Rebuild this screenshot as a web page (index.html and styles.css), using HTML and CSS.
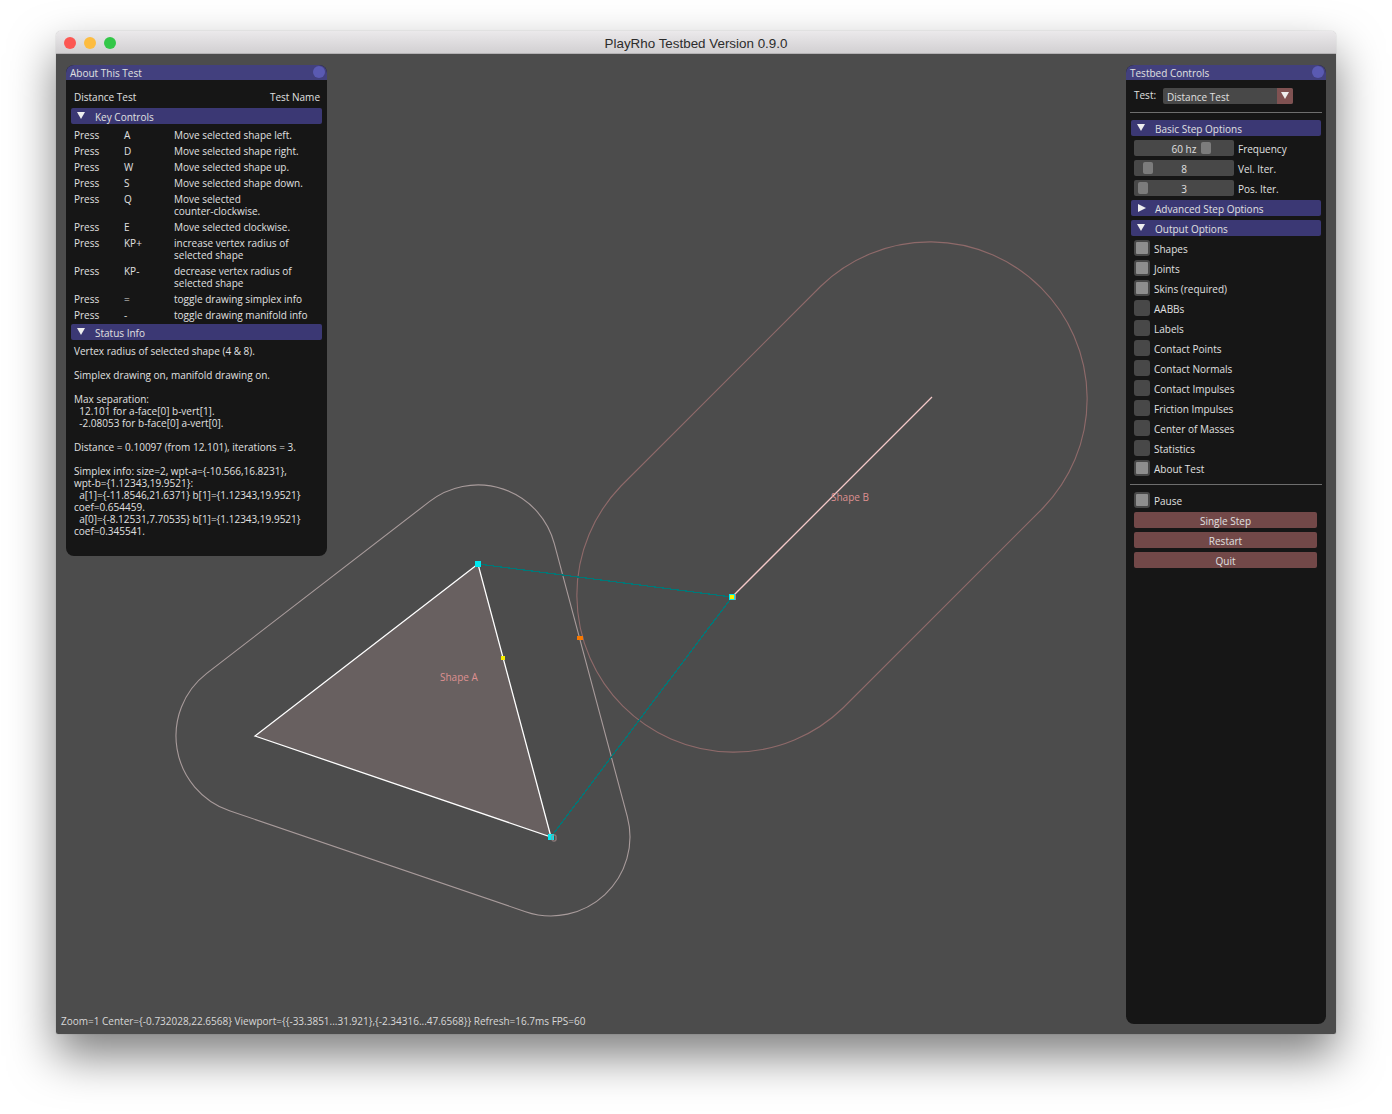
FILE: index.html
```html
<!DOCTYPE html>
<html lang="en">
<head>
    <meta charset="UTF-8">
    <title>PlayRho Testbed Version 0.9.0</title>
    <link rel="stylesheet" href="styles.css">
</head>
<body>
    <div class="window">
        <div class="titlebar">
            <div class="lights">
                <span class="light red"></span>
                <span class="light yellow"></span>
                <span class="light green"></span>
            </div>
            <span class="title">PlayRho Testbed Version 0.9.0</span>
        </div>

        <div class="canvas">
            <svg class="scene" viewBox="56 54 1280 980" width="1280" height="980">
                <polygon points="478,564 255,736 551,837" fill="#686060" stroke="none"/>
                <path d="M429.7 501.4 L206.7 673.4 A79 79 0 0 0 229.5 810.7 L525.5 911.7 A79 79 0 0 0 627.3 816.6 L554.3 543.6 A79 79 0 0 0 429.7 501.4 Z" fill="none" stroke="#a89b9b" stroke-width="1.1"/>
                <path d="M621 486 L821 286 A157 157 0 0 1 1043 508 L843 708 A157 157 0 0 1 621 486 Z" fill="none" stroke="#8f6a6a" stroke-width="1.1"/>
                <line class="crisp" x1="478" y1="564" x2="732" y2="597" stroke="#007878" stroke-width="1.2"/>
                <line class="crisp" x1="551" y1="837" x2="732" y2="597" stroke="#007878" stroke-width="1.2"/>
                <polygon points="478,564 255,736 551,837" fill="none" stroke="#fff" stroke-width="1.3"/>
                <line x1="732" y1="597" x2="932" y2="397" stroke="#f4c8c8" stroke-width="1.3"/>
                <rect x="475" y="561" width="6" height="6" fill="#00e8f0"/>
                <rect x="548" y="834" width="6" height="6" fill="#00e8f0"/>
                <rect x="552" y="835" width="4" height="6" rx="1" fill="none" stroke="#a08888" stroke-width="1"/>
                <rect x="501" y="656" width="4" height="4" fill="#f8f000"/>
                <rect x="577" y="636" width="6" height="4" fill="#f87800"/>
                <rect x="729" y="594" width="6" height="6" fill="#00e8f0"/>
                <rect x="730" y="595" width="4" height="4" fill="#f8f000"/>
                <rect x="735" y="594" width="1" height="6" fill="#a08888"/>
            </svg>

            <span class="shape-label label-a">Shape A</span>
            <span class="shape-label label-b">Shape B</span>

            <div class="panel about">
                <div class="panel-title">About This Test<span class="collapse-dot"></span></div>
                <div class="panel-body">
                    <div class="name-row"><span>Distance Test</span><span>Test Name</span></div>
                    <div class="section"><span class="arrow-down"></span>Key Controls</div>
                    <div class="keys">
                        <span>Press</span><span>A</span><span>Move selected shape left.</span>
                        <span>Press</span><span>D</span><span>Move selected shape right.</span>
                        <span>Press</span><span>W</span><span>Move selected shape up.</span>
                        <span>Press</span><span>S</span><span>Move selected shape down.</span>
                        <span>Press</span><span>Q</span><span>Move selected<br>counter-clockwise.</span>
                        <span>Press</span><span>E</span><span>Move selected clockwise.</span>
                        <span>Press</span><span>KP+</span><span>increase vertex radius of<br>selected shape</span>
                        <span>Press</span><span>KP-</span><span>decrease vertex radius of<br>selected shape</span>
                        <span>Press</span><span>=</span><span>toggle drawing simplex info</span>
                        <span>Press</span><span>-</span><span>toggle drawing manifold info</span>
                    </div>
                    <div class="section"><span class="arrow-down"></span>Status Info</div>
                    <pre class="status">Vertex radius of selected shape (4 &amp; 8).

Simplex drawing on, manifold drawing on.

Max separation:
  12.101 for a-face[0] b-vert[1].
  -2.08053 for b-face[0] a-vert[0].

Distance = 0.10097 (from 12.101), iterations = 3.

Simplex info: size=2, wpt-a={-10.566,16.8231},
wpt-b={1.12343,19.9521}:
  a[1]={-11.8546,21.6371} b[1]={1.12343,19.9521}
coef=0.654459.
  a[0]={-8.12531,7.70535} b[1]={1.12343,19.9521}
coef=0.345541.</pre>
                </div>
            </div>

            <div class="panel controls">
                <div class="panel-title">Testbed Controls<span class="collapse-dot"></span></div>
                <div class="panel-body controls-body">
                    <div class="test-row">
                        <span class="test-label">Test:</span>
                        <div class="combo">Distance Test<span class="combo-btn"><span class="arrow-down"></span></span></div>
                    </div>
                    <hr class="sep">
                    <div class="section"><span class="arrow-down"></span>Basic Step Options</div>
                    <div class="slider-row"><div class="slider">60 hz<span class="grab grab-freq"></span></div>Frequency</div>
                    <div class="slider-row"><div class="slider">8<span class="grab grab-vel"></span></div>Vel. Iter.</div>
                    <div class="slider-row"><div class="slider">3<span class="grab grab-pos"></span></div>Pos. Iter.</div>
                    <div class="section"><span class="arrow-right"></span>Advanced Step Options</div>
                    <div class="section"><span class="arrow-down"></span>Output Options</div>
                    <div class="check-row"><span class="check on"></span>Shapes</div>
                    <div class="check-row"><span class="check on"></span>Joints</div>
                    <div class="check-row"><span class="check on"></span>Skins (required)</div>
                    <div class="check-row"><span class="check"></span>AABBs</div>
                    <div class="check-row"><span class="check"></span>Labels</div>
                    <div class="check-row"><span class="check"></span>Contact Points</div>
                    <div class="check-row"><span class="check"></span>Contact Normals</div>
                    <div class="check-row"><span class="check"></span>Contact Impulses</div>
                    <div class="check-row"><span class="check"></span>Friction Impulses</div>
                    <div class="check-row"><span class="check"></span>Center of Masses</div>
                    <div class="check-row"><span class="check"></span>Statistics</div>
                    <div class="check-row"><span class="check on"></span>About Test</div>
                    <hr class="sep">
                    <div class="check-row"><span class="check on"></span>Pause</div>
                    <div class="btn">Single Step</div>
                    <div class="btn">Restart</div>
                    <div class="btn">Quit</div>
                </div>
            </div>

            <div class="statusline">Zoom=1 Center={-0.732028,22.6568} Viewport={{-33.3851...31.921},{-2.34316...47.6568}} Refresh=16.7ms FPS=60</div>
        </div>
    </div>
</body>
</html>
```

FILE: styles.css
```css
html, body {
    margin: 0;
    height: 100%;
}

body {
    background: #fff;
    padding: 31px 56px 0;
    box-sizing: border-box;
    overflow: hidden;
    font-family: "Open Sans", "Noto Sans", sans-serif;
    font-size: 10px;
    line-height: 12px;
    color: #e0e0e0;
}

.window {
    width: 1280px;
    height: 1003px;
    display: flex;
    flex-direction: column;
    border-radius: 5px 5px 2px 2px;
    box-shadow: 0 22px 46px rgba(0, 0, 0, 0.5), 0 0 1px rgba(0, 0, 0, 0.4);
}

.titlebar {
    height: 23px;
    flex: none;
    position: relative;
    display: flex;
    align-items: center;
    justify-content: center;
    box-sizing: border-box;
    padding-top: 3px;
    border-radius: 5px 5px 0 0;
    border-bottom: 1px solid #b4b2b4;
    background: linear-gradient(#ebe9eb, #d2d0d2);
}

.lights {
    position: absolute;
    left: 8px;
    top: 6px;
    display: flex;
    gap: 8px;
}

.light {
    width: 12px;
    height: 12px;
    border-radius: 50%;
}

.red { background: #fc5753; }
.yellow { background: #fdbc40; }
.green { background: #33c748; }

.title {
    font-family: "Liberation Sans", Arial, sans-serif;
    font-size: 13.4px;
    color: #2c2c2c;
}

.canvas {
    flex: 1;
    position: relative;
    background: #4c4c4c;
    border-radius: 0 0 2px 2px;
}

.scene {
    position: absolute;
    left: 0;
    top: 0;
}

.crisp {
    shape-rendering: crispEdges;
}

.shape-label {
    position: absolute;
    color: #de9090;
}

.label-a { left: 384px; top: 617px; }
.label-b { left: 775px; top: 437px; }

.panel {
    position: absolute;
    background: #161616;
    border-radius: 8px;
}

.about {
    left: 10px;
    top: 11px;
    width: 261px;
    height: 491px;
}

.controls {
    left: 1070px;
    top: 11px;
    width: 200px;
    height: 959px;
}

.panel-title {
    height: 15px;
    position: relative;
    padding-left: 4px;
    line-height: 16px;
    border-radius: 8px 8px 0 0;
    background: #42407e;
}

.collapse-dot {
    position: absolute;
    right: 2px;
    top: 1px;
    width: 12px;
    height: 12px;
    border-radius: 50%;
    background: #5a5ab2;
}

.panel-body {
    padding: 11px 5px 0;
}

.name-row {
    display: flex;
    justify-content: space-between;
    padding: 0 2px 0 3px;
    margin-bottom: 5px;
}

.section {
    width: 190px;
    height: 16px;
    display: flex;
    align-items: center;
    position: relative;
    padding-left: 24px;
    padding-top: 1px;
    box-sizing: border-box;
    border-radius: 2px;
    background: #3b3874;
}

.about .section {
    width: 251px;
}

.arrow-down {
    position: absolute;
    left: 6px;
    top: 4px;
    width: 0;
    height: 0;
    border-left: 4.5px solid transparent;
    border-right: 4.5px solid transparent;
    border-top: 7px solid #eee;
}

.arrow-right {
    position: absolute;
    left: 7px;
    top: 4px;
    width: 0;
    height: 0;
    border-top: 4.5px solid transparent;
    border-bottom: 4.5px solid transparent;
    border-left: 8px solid #eee;
}

.keys {
    display: grid;
    grid-template-columns: 50px 50px 1fr;
    row-gap: 4px;
    padding: 5px 0 3px 3px;
}

.status {
    margin: 5px 0 0 3px;
    font: inherit;
}

.controls-body {
    display: flex;
    flex-direction: column;
    gap: 4px;
    padding-top: 8px;
}

.test-row {
    display: flex;
    gap: 6px;
    height: 16px;
    padding-left: 3px;
}

.test-label {
    width: 23px;
    margin-top: 1px;
}

.combo {
    width: 130px;
    height: 16px;
    position: relative;
    box-sizing: border-box;
    padding: 3px 0 0 4px;
    border-radius: 2px;
    background: #484848;
}

.combo-btn {
    position: absolute;
    right: 0;
    top: 0;
    width: 16px;
    height: 16px;
    border-radius: 0 2px 2px 0;
    background: #805252;
}

.combo-btn .arrow-down {
    left: 4px;
    top: 4px;
}

.sep {
    width: 192px;
    height: 1px;
    margin: 4px 0 3px -1px;
    border: 0;
    background: #6e6e6e;
}

.slider-row,
.check-row {
    display: flex;
    align-items: flex-start;
    gap: 4px;
    height: 16px;
    padding-left: 3px;
    line-height: 18px;
}

.slider {
    width: 100px;
    height: 16px;
    position: relative;
    border-radius: 2px;
    background: #484848;
    text-align: center;
}

.grab {
    position: absolute;
    top: 2px;
    width: 10px;
    height: 12px;
    border-radius: 2px;
    background: #7c7c7c;
}

.grab-freq { left: 67px; }
.grab-vel { left: 9px; }
.grab-pos { left: 4px; }

.check {
    width: 16px;
    height: 16px;
    flex: none;
    box-sizing: border-box;
    border: 2px solid #484848;
    border-radius: 3px;
    background: #484848;
}

.check.on {
    background: #8e8e8e;
}

.btn {
    width: 183px;
    height: 16px;
    margin-left: 3px;
    border-radius: 2px;
    background: #724848;
    line-height: 18px;
    text-align: center;
}

.statusline {
    position: absolute;
    left: 5px;
    top: 961px;
    color: #d8d8d8;
}
```
